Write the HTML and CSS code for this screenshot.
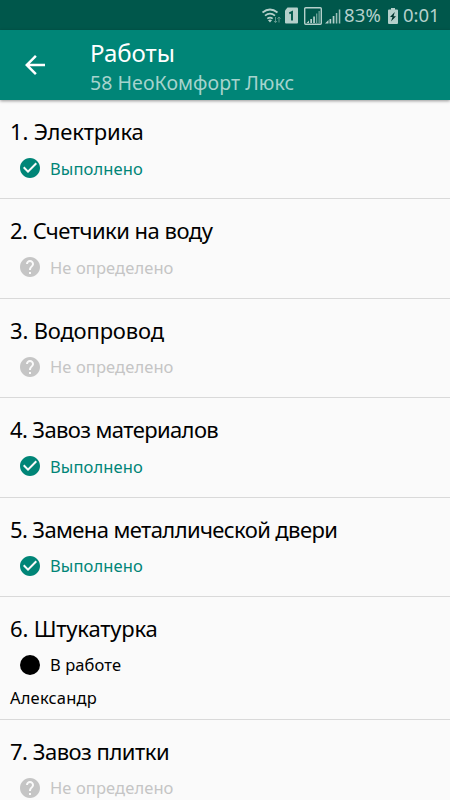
FILE: index.html
```
<!DOCTYPE html>
<html lang="ru">
<head>
<meta charset="utf-8">
<title>Работы</title>
<link rel="stylesheet" href="styles.css">
</head>
<body>
<svg width="0" height="0" class="defs">
  <symbol id="done" viewBox="2 2 20 20"><path fill="currentColor" d="M12 2C6.48 2 2 6.48 2 12s4.48 10 10 10 10-4.48 10-10S17.52 2 12 2zm-2 15l-5-5 1.41-1.41L10 14.17l7.59-7.59L19 8l-9 9z"/></symbol>
  <symbol id="unknown" viewBox="2 2 20 20"><path fill="currentColor" d="M12 2C6.48 2 2 6.48 2 12s4.48 10 10 10 10-4.48 10-10S17.52 2 12 2zm1 17h-2v-2h2v2zm2.07-7.75l-.9.92C13.45 12.9 13 13.5 13 15h-2v-.5c0-1.1.45-2.1 1.17-2.83l1.24-1.26c.37-.36.59-.86.59-1.41 0-1.1-.9-2-2-2s-2 .9-2 2H8c0-2.21 1.79-4 4-4s4 1.79 4 4c0 .88-.36 1.68-.93 2.25z"/></symbol>
  <symbol id="dot" viewBox="0 0 20 20"><circle cx="10" cy="10" r="10" fill="currentColor"/></symbol>
</svg>
<div class="statusbar">
  <svg class="indicators" viewBox="0 0 82 24" width="82" height="24">
    <g fill="none" stroke="#b5d0cb" stroke-width="1.7">
      <path d="M1.500 9.500Q9 3.500 16.500 9.500M4 12.700Q9 8.500 14 12.700M6.300 15.700Q9 13.500 11.700 15.700"/>
    </g>
    <path fill="#b5d0cb" d="M7 17.300Q9 15.800 11 17.300L9 19.500z"/>
    <path fill="none" stroke="#5f978d" stroke-width="1" d="M14.500 14v5.500M13 18l1.500 1.700L16 18M18 19.500V14M16.500 15.700L18 14l1.500 1.700"/>
    <path fill="#b5d0cb" d="M26.500 4.500H36q1 0 1 1V19.500q0 1-1 1H25q-1 0-1-1V7.500z"/>
    <path fill="none" stroke="#00574b" stroke-width="1.900" d="M28.300 10.300L31 9V17.500"/>
    <rect x="43.700" y="4.700" width="16.600" height="16.600" rx="1" fill="none" stroke="#b5d0cb" stroke-width="1.400"/>
    <path fill="#b5d0cb" d="M45.500 20l2.500-2.500V20zM49.300 16h1.700v4h-1.700zM52.200 13.500h1.700V20h-1.700z"/>
    <path fill="#6ba197" d="M55 10.500h1.300V20H55zM57.500 8h1.300v12h-1.300z"/>
    <path fill="#b5d0cb" d="M64 20.500l3.500-3.500v3.500zM68.500 16h1.700v4.500h-1.700zM71.700 13h1.700v7.500h-1.700z"/>
    <path fill="#9bc0b9" d="M74.800 10h1.500v10.500h-1.500zM77.800 6.500h1.500v14h-1.500z"/>
  </svg>
  <span class="percent">83%</span>
  <svg class="battery" viewBox="0 0 10 16" width="10" height="16"><path fill="#b5d0cb" d="M3 0h4v1.500h2q1 0 1 1V15q0 1-1 1H1q-1 0-1-1V2.500q0-1 1-1h2z"/><path fill="#00342d" d="M6.800 4L2 9h2.500L3 13.500 8 8.300H5.500z"/></svg>
  <span class="clock">0:01</span>
</div>
<header class="appbar">
  <svg class="back" viewBox="4 4 16 16" width="20" height="20"><path fill="#fff" d="M20 11H7.830l5.590-5.590L12 4l-8 8 8 8 1.410-1.410L7.830 13H20v-2z"/></svg>
  <div class="heading">
    <h1>Работы</h1>
    <p>58 НеоКомфорт Люкс</p>
  </div>
</header>
<main class="list">
  <section class="item"><h2>1. Электрика</h2><div class="state done"><svg><use href="#done"/></svg><span>Выполнено</span></div></section>
  <section class="item"><h2 class="snug">2. Счетчики на воду</h2><div class="state unknown"><svg><use href="#unknown"/></svg><span>Не определено</span></div></section>
  <section class="item"><h2>3. Водопровод</h2><div class="state unknown"><svg><use href="#unknown"/></svg><span>Не определено</span></div></section>
  <section class="item"><h2 class="tight">4. Завоз материалов</h2><div class="state done"><svg><use href="#done"/></svg><span>Выполнено</span></div></section>
  <section class="item"><h2 class="tight">5. Замена металлической двери</h2><div class="state done"><svg><use href="#done"/></svg><span>Выполнено</span></div></section>
  <section class="item assigned"><h2>6. Штукатурка</h2><div class="state active"><svg><use href="#dot"/></svg><span>В работе</span></div><p class="worker">Александр</p></section>
  <section class="item"><h2 class="snug">7. Завоз плитки</h2><div class="state unknown"><svg><use href="#unknown"/></svg><span>Не определено</span></div></section>
</main>
</body>
</html>
```
FILE: styles.css
```
* { box-sizing: border-box; }
html, body { height: 100%; }
body {
  margin: 0;
  height: 800px;
  overflow: hidden;
  display: flex;
  flex-direction: column;
  background: #fafafa;
  color: #000;
  font-family: "Noto Sans", sans-serif;
}
h1, h2, p { margin: 0; font-weight: 400; white-space: nowrap; }
.defs { position: absolute; }
.statusbar {
  flex: none;
  height: 30px;
  padding: 1px 11px 1px 0;
  display: flex;
  justify-content: flex-end;
  align-items: center;
  background: #00574b;
  color: #b5d0cb;
  font-size: 18.5px;
  line-height: 28px;
}
.indicators { margin: 0 1px 0 0; }
.percent { width: 39px; letter-spacing: 0.2px; }
.battery { margin: 1px 5px 0 5px; }
.clock { width: 36px; }
.appbar {
  flex: none;
  height: 70px;
  padding-left: 25px;
  display: flex;
  align-items: flex-start;
  background: #008577;
  box-shadow: 0 1px 3px rgba(0, 0, 0, .4);
  position: relative;
}
.back { margin-top: 25px; }
.heading { margin: 7px 0 0 45px; }
h1 { font-size: 24px; line-height: 32px; color: #fff; }
.heading p { font-size: 19.5px; line-height: 28px; letter-spacing: 0.06px; color: #a6d3cd; }
.list { flex: 1; overflow: hidden; }
.item {
  height: 99.4px;
  padding: 15px 10px 0;
  border-bottom: 1px solid #d9d9d9;
}
.assigned { height: 122.6px; }
h2 { font-size: 22px; line-height: 32px; letter-spacing: -0.18px; }
.snug { letter-spacing: -0.5px; }
.tight { letter-spacing: -0.61px; }
.state {
  height: 20px;
  margin: 11px 0 0 10px;
  display: flex;
  align-items: center;
  gap: 10px;
  font-size: 16.5px;
  letter-spacing: 0.1px;
}
.state svg { flex: none; width: 20px; height: 20px; }
.done { color: #008577; }
.unknown { color: #c5c5c5; }
.worker { margin-top: 11px; font-size: 16.5px; line-height: 24px; letter-spacing: 0.2px; }
```
